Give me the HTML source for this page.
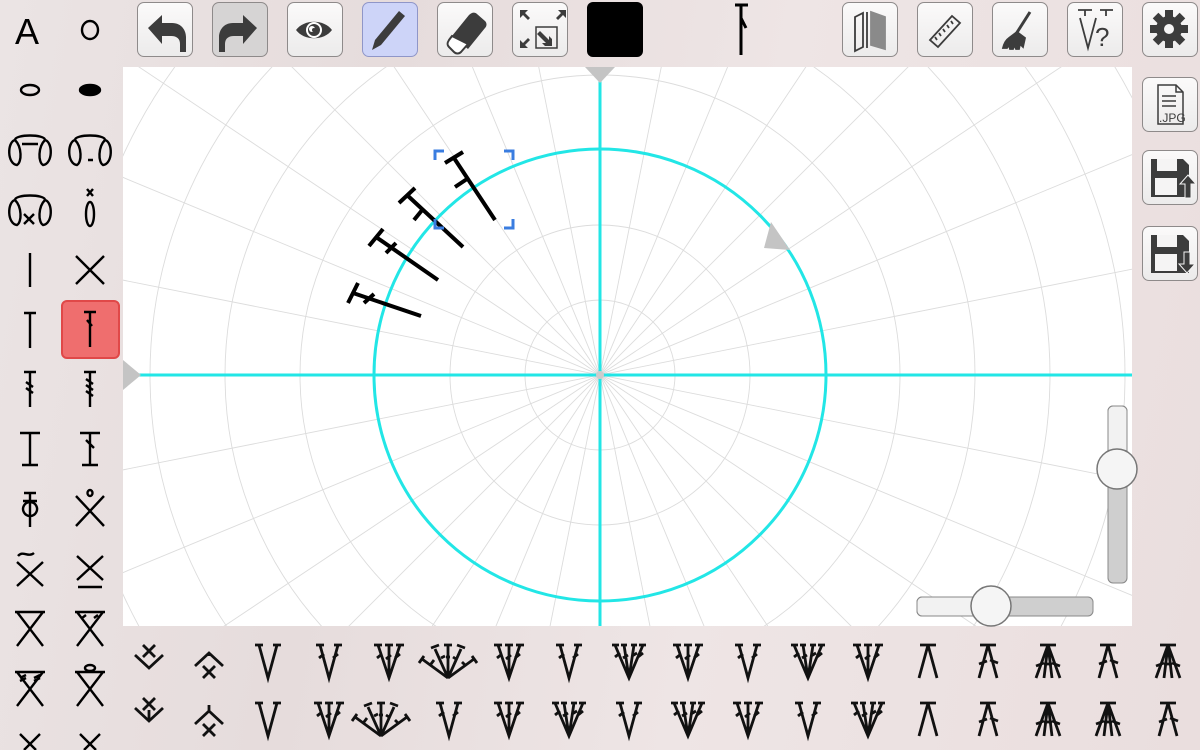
<!DOCTYPE html>
<html><head><meta charset="utf-8"><style>
html,body{margin:0;padding:0;width:1200px;height:750px;overflow:hidden;font-family:"Liberation Sans",sans-serif}
body{background:linear-gradient(100deg,#ebe4e4 0%,#e6dcdc 30%,#eee5e5 60%,#eadede 100%);position:relative}
.btn{position:absolute;width:56px;height:55px;border:1.5px solid #8e8a8a;border-radius:7px;background:linear-gradient(#fbfafa,#ecebeb);box-sizing:border-box}
svg{position:absolute;left:0;top:0}
</style></head><body>
<div class="btn" style="left:137px;top:2px"></div>
<div class="btn" style="left:212px;top:2px;background:#d6d4d4"></div>
<div class="btn" style="left:287px;top:2px"></div>
<div class="btn" style="left:362px;top:2px;background:#cdd4f8;border-color:#8f96c8"></div>
<div class="btn" style="left:437px;top:2px"></div>
<div class="btn" style="left:512px;top:2px"></div>
<div style="position:absolute;left:587px;top:2px;width:56px;height:55px;background:#000;border-radius:6px"></div>
<div class="btn" style="left:842px;top:2px"></div>
<div class="btn" style="left:917px;top:2px"></div>
<div class="btn" style="left:992px;top:2px"></div>
<div class="btn" style="left:1067px;top:2px"></div>
<div class="btn" style="left:1142px;top:2px"></div>
<div class="btn" style="left:1142px;top:77px"></div>
<div class="btn" style="left:1142px;top:150px"></div>
<div class="btn" style="left:1142px;top:226px"></div>
<div style="position:absolute;left:61px;top:300px;width:59px;height:59px;box-sizing:border-box;border:2px solid #e04848;border-radius:6px;background:#ef6e6e"></div>
<div style="position:absolute;left:123px;top:67px;width:1009px;height:559px;background:#fff"></div>

<svg width="1200" height="750" viewBox="0 0 1200 750">
<defs>
<clipPath id="cv"><rect x="123" y="67" width="1009" height="559"/></clipPath>
<clipPath id="pg"><rect x="0" y="0" width="1200" height="750"/></clipPath>
<g id="V2"><path d="M-9,-16L0,17L9,-16M-13,-16h8M5,-16h8"/></g>
<g id="V2t"><path d="M-9,-16L0,17L9,-16M-13,-16h8M5,-16h8M-10,-3l5,-4M4,-3l5,-4"/></g>
<g id="V3t"><path d="M-11,-16L0,17L11,-16M0,-16V17M-15,-16h8M-4,-16h8M7,-16h8M-12,-3l5,-4M-3,-2l5,-4M6,-3l5,-4"/></g>
<g id="V4t"><path d="M-14,-16L0,17L14,-16M-5,-16L0,17L5,-16M-17,-16h7M-8,-16h6M2,-16h6M10,-16h7M-14,-4l5,-4M-6,-3l5,-3M3,-5l5,-3M9,-4l5,-4"/></g>
<g id="F5"><path d="M0,17L-26,-2M0,17L-13,-12M0,17V-16M0,17L13,-12M0,17L26,-2M-29,2l5,-7M-17,-13l8,-3M-4,-16h8M9,-16l8,3M24,-5l5,7M-17,3l3,-4M-7,-3l4,-2M-2,-4h4M5,-4l3,2M14,1l3,3"/></g>
<g id="L2"><path d="M0,-16L-9,17M0,-16L9,17M-8,-16h16"/></g>
<g id="L2t"><path d="M0,-16L-9,17M0,-16L9,17M-8,-16h16M-9,3l8,-3M2,-1l8,3"/></g>
<g id="L4t"><path d="M0,-16L-12,17M0,-16L12,17M0,-16L-4,17M0,-16L4,17M-8,-16h16M-12,5l8,-3M-4,3h8M4,2l8,3"/></g>
</defs>

<g clip-path="url(#cv)" fill="none" stroke="#dcdcdc" stroke-width="0.9">
<circle cx="600" cy="375" r="75"/><circle cx="600" cy="375" r="150"/><circle cx="600" cy="375" r="300"/><circle cx="600" cy="375" r="375"/><circle cx="600" cy="375" r="450"/><circle cx="600" cy="375" r="525"/><circle cx="600" cy="375" r="600"/>
<g>
<line x1="0" y1="375" x2="1200" y2="375" transform="rotate(11.25 600 375)"/>
<line x1="0" y1="375" x2="1200" y2="375" transform="rotate(22.5 600 375)"/>
<line x1="0" y1="375" x2="1200" y2="375" transform="rotate(33.75 600 375)"/>
<line x1="0" y1="375" x2="1200" y2="375" transform="rotate(45 600 375)"/>
<line x1="0" y1="375" x2="1200" y2="375" transform="rotate(56.25 600 375)"/>
<line x1="0" y1="375" x2="1200" y2="375" transform="rotate(67.5 600 375)"/>
<line x1="0" y1="375" x2="1200" y2="375" transform="rotate(78.75 600 375)"/>
<line x1="0" y1="375" x2="1200" y2="375" transform="rotate(101.25 600 375)"/>
<line x1="0" y1="375" x2="1200" y2="375" transform="rotate(112.5 600 375)"/>
<line x1="0" y1="375" x2="1200" y2="375" transform="rotate(123.75 600 375)"/>
<line x1="0" y1="375" x2="1200" y2="375" transform="rotate(135 600 375)"/>
<line x1="0" y1="375" x2="1200" y2="375" transform="rotate(146.25 600 375)"/>
<line x1="0" y1="375" x2="1200" y2="375" transform="rotate(157.5 600 375)"/>
<line x1="0" y1="375" x2="1200" y2="375" transform="rotate(168.75 600 375)"/>
</g>
<circle cx="600" cy="375" r="226" stroke="#22e6e6" stroke-width="3"/>
<line x1="123" y1="375" x2="1132" y2="375" stroke="#22e6e6" stroke-width="3"/>
<line x1="600" y1="67" x2="600" y2="626" stroke="#22e6e6" stroke-width="3"/>
<circle cx="600" cy="375" r="4" fill="#ccc" stroke="none"/>
</g>
<path d="M585,67h30l-15,16z" fill="#c4c4c4"/>
<path d="M123,360v30l18,-15z" fill="#c4c4c4"/>
<path d="M771,222l-7,26l26,2z" fill="#c4c4c4"/>
<g stroke="#000" stroke-width="4" fill="none">
<path d="M421,316L353,293M348,303L358,283M364,303l10,-9"/>
<path d="M438,280L376,237M369,246L383,229M386,253l10,-10"/>
<path d="M463,247L407,195M399,203L415,188M414,220l9,-11"/>
<path d="M495,220L454,158M445,163L463,152M455,187l12,-8"/>
</g>
<g stroke="#3a7de0" stroke-width="3" fill="none">
<path d="M435,160v-9h9M504,151h9v9M435,219v9h9M504,228h9v-9"/>
</g>
<rect x="1108" y="406" width="19" height="177" rx="5" fill="#cfcfcf" stroke="#888"/>
<rect x="1108" y="406" width="19" height="64" rx="5" fill="#f2f2f2" stroke="#888"/>
<circle cx="1117" cy="469" r="20" fill="#f5f5f5" stroke="#777" stroke-width="1.5"/>
<rect x="917" y="597" width="176" height="19" rx="5" fill="#cfcfcf" stroke="#888"/>
<rect x="917" y="597" width="74" height="19" rx="5" fill="#f2f2f2" stroke="#888"/>
<circle cx="991" cy="606" r="20" fill="#f5f5f5" stroke="#777" stroke-width="1.5"/>

<g fill="#3c3c3c">
<path d="M148,28l14,-13v8h10c10,0,14,8,14,14v15h-6v-8c0,-5,-3,-8,-9,-8h-9v8z"/>
<path d="M257,28l-14,-13v8h-10c-10,0,-14,8,-14,14v15h6v-8c0,-5,3,-8,9,-8h9v8z"/>
<path d="M296,30c8,-11,28,-11,36,0c-8,11,-28,11,-36,0z"/>
<circle cx="314" cy="30" r="8" fill="#fff"/><circle cx="314" cy="30" r="6"/><circle cx="312" cy="29" r="3" fill="#fff"/><circle cx="314" cy="30" r="2"/>
<path d="M372,50l3,-10l24,-29l6,5l-24,29z"/>
<path d="M452,36l17,-21c3,-3,6,-3,8,-1l8,7c2,2,2,5,0,7l-17,21z"/>
<path d="M452,36l-3,4c-2,3,-2,5,0,7l5,5c2,2,5,2,7,0l7,-8z" fill="#fff" stroke="#3c3c3c" stroke-width="2"/>
<path d="M520,10h8l-3,3l5,5l-2,2l-5,-5l-3,3zM566,10h-8l3,3l-5,5l2,2l5,-5l3,3zM520,48h8l-3,-3l5,-5l-2,-2l-5,5l-3,-3z"/>
<rect x="536" y="27" width="21" height="21" fill="none" stroke="#3c3c3c" stroke-width="1.5"/>
<path d="M540,31l9,9v-4l3,3v7h-7l-3,-3h4l-9,-9z"/>
</g>
<g stroke="#000" stroke-width="3" fill="none"><path d="M741,5v50M735,5h13M741,18l5,10"/></g>
<g fill="none" stroke="#3c3c3c" stroke-width="1.8">
<path d="M855,17l8,-4v34l-8,4z"/><path d="M867,12v36"/>
<path d="M871,12l14,5v32l-14,-4z" fill="#8a8a8a" stroke="#8a8a8a"/>
<path d="M930,40l22,-24l8,7l-22,24z"/><path d="M935,37l2,3M939,33l2,3M943,29l2,3M947,25l2,3M951,21l2,3"/>
<path d="M1030,12l-14,22" stroke-width="3"/>
<path d="M1017,32l-8,6c-3,2,-5,6,-6,10h4l2,-3l1,4h3l1,-4l2,4h3l1,-5l3,3l2,-9z" fill="#3c3c3c"/>
<path d="M1078,10h14M1085,10v6M1100,10h13M1106,10v6M1080,18l8,30l8,-30" stroke="#3c3c3c"/>
</g>
<text x="1095" y="46" font-size="26" fill="#3c3c3c" font-family="Liberation Sans">?</text>
<g transform="translate(1169,29)" fill="#3c3c3c">
<circle r="13"/>
<rect x="-4" y="-19" width="8" height="38"/><rect x="-4" y="-19" width="8" height="38" transform="rotate(45)"/><rect x="-4" y="-19" width="8" height="38" transform="rotate(90)"/><rect x="-4" y="-19" width="8" height="38" transform="rotate(135)"/>
<circle r="5" fill="#f5f4f4"/>
</g>
<g fill="none" stroke="#3c3c3c" stroke-width="1.5">
<path d="M1158,85h18l7,7v32h-25z"/><path d="M1176,85v7h7M1162,96h14M1162,101h14M1162,106h14"/>
</g>
<text x="1159" y="122" font-size="12" fill="#3c3c3c">.JPG</text>
<g fill="#3c3c3c">
<path d="M1151,159h32l6,6v32h-38z"/>
<rect x="1157" y="159" width="20" height="12" fill="#f5f4f4"/>
<rect x="1155" y="178" width="22" height="17" fill="#f5f4f4"/>
<path d="M1180,184l8,-9l8,9h-5v14h-6v-14z" fill="#3c3c3c" stroke="#f5f4f4"/>
<path d="M1151,235h32l6,6v32h-38z"/>
<rect x="1157" y="235" width="20" height="12" fill="#f5f4f4"/>
<rect x="1155" y="254" width="22" height="17" fill="#f5f4f4"/>
<path d="M1184,252h6v12h5l-8,9l-8,-9h5z" stroke="#f5f4f4"/>
</g>

<text x="15" y="44" font-size="36" fill="#000">A</text>
<g fill="none" stroke="#000" stroke-width="2.4" clip-path="url(#pg)">
<ellipse cx="90" cy="30" rx="8" ry="9"/>
<ellipse cx="30" cy="90" rx="9" ry="5"/>
<ellipse cx="90" cy="90" rx="10" ry="5" fill="#000"/>
<path d="M15,140c0,-6,30,-6,30,0M15,140c-8,2,-8,24,2,25c5,-3,5,-18,-2,-25M45,140c8,2,8,24,-2,25c-5,-3,-5,-18,2,-25M22,144h16"/>
<path d="M75,140c0,-6,30,-6,30,0M75,140c-8,2,-8,24,2,25c5,-3,5,-18,-2,-25M105,140c8,2,8,24,-2,25c-5,-3,-5,-18,2,-25M88,160h5" />
<path d="M15,200c0,-6,30,-6,30,0M15,200c-8,2,-8,24,2,25c5,-3,5,-18,-2,-25M45,200c8,2,8,24,-2,25c-5,-3,-5,-18,2,-25M24,214l10,10M34,214l-10,10"/>
<ellipse cx="90" cy="214" rx="4" ry="12"/><path d="M87,189l6,7M93,189l-6,7"/>
<path d="M30,253v34"/><path d="M76,256l28,28M104,256l-28,28"/>
<path d="M30,313v35M24,313h12"/>
<path d="M90,312v35M84,312h12M87,320l5,6"/>
<path d="M30,372v35M24,372h12M26,382l7,5M26,388l7,5"/>
<path d="M90,372v35M84,372h12M86,379l7,5M86,385l7,5M86,391l7,5"/>
<path d="M30,433v32M20,433h20M22,465h16"/>
<path d="M90,433v32M80,433h20M82,465h16M86,440l8,8"/>
<path d="M30,493v34M24,493h12M23,501h14M30,502a7,7 0 1 0 0.1,0"/>
<path d="M76,496l28,30M104,496l-28,30"/><ellipse cx="90" cy="493" rx="2.5" ry="3"/>
<path d="M17,562l26,24M43,562l-26,24M18,556c5,-6,10,2,16,-3"/>
<path d="M77,556l26,24M103,556l-26,24M78,587h24"/>
<path d="M17,612l26,34M43,612l-26,34M15,612h30"/>
<path d="M77,612l26,34M103,612l-26,34M75,612h30M82,618l4,-3M94,618l4,-3"/>
<path d="M17,672l26,34M43,672l-26,34M15,672h30M20,678l6,-3M20,681l6,-3M34,678l6,-3M34,681l6,-3"/>
<path d="M77,672l26,34M103,672l-26,34M75,672h30"/><ellipse cx="90" cy="668" rx="5" ry="3"/>
<path d="M20,734l16,16M40,734l-16,16M80,734l16,16M100,734l-16,16"/>
</g>

<g fill="none" stroke="#111" stroke-width="2.8">
<path d="M135,655l14,13l14,-13M143,645l12,12M155,645l-12,12"/>
<path d="M135,708l14,13l14,-13M143,698l12,12M155,698l-12,12M149,710v11"/>
<path d="M195,666l14,-13l14,13M203,666l12,12M215,666l-12,12M209,653v3"/>
<path d="M195,724l14,-13l14,13M203,724l12,12M215,724l-12,12M209,705v8"/>
<use href="#V2" x="268" y="661"/><use href="#V2" x="268" y="719"/>
<use href="#V2t" x="329" y="661"/><use href="#V3t" x="329" y="719"/>
<use href="#V3t" x="389" y="661"/><use href="#F5" x="381" y="719"/>
<use href="#F5" x="448" y="661"/><use href="#V2t" x="449" y="719"/>
<use href="#V3t" x="509" y="661"/><use href="#V3t" x="509" y="719"/>
<use href="#V2t" x="569" y="661"/><use href="#V4t" x="569" y="719"/>
<use href="#V4t" x="629" y="661"/><use href="#V2t" x="629" y="719"/>
<use href="#V3t" x="688" y="661"/><use href="#V4t" x="688" y="719"/>
<use href="#V2t" x="748" y="661"/><use href="#V3t" x="748" y="719"/>
<use href="#V4t" x="808" y="661"/><use href="#V2t" x="808" y="719"/>
<use href="#V3t" x="868" y="661"/><use href="#V4t" x="868" y="719"/>
<use href="#L2" x="928" y="661"/><use href="#L2" x="928" y="719"/>
<use href="#L2t" x="988" y="661"/><use href="#L2t" x="988" y="719"/>
<use href="#L4t" x="1048" y="661"/><use href="#L4t" x="1048" y="719"/>
<use href="#L2t" x="1108" y="661"/><use href="#L4t" x="1108" y="719"/>
<use href="#L4t" x="1168" y="661"/><use href="#L2t" x="1168" y="719"/>
</g>
</svg>
</body></html>
